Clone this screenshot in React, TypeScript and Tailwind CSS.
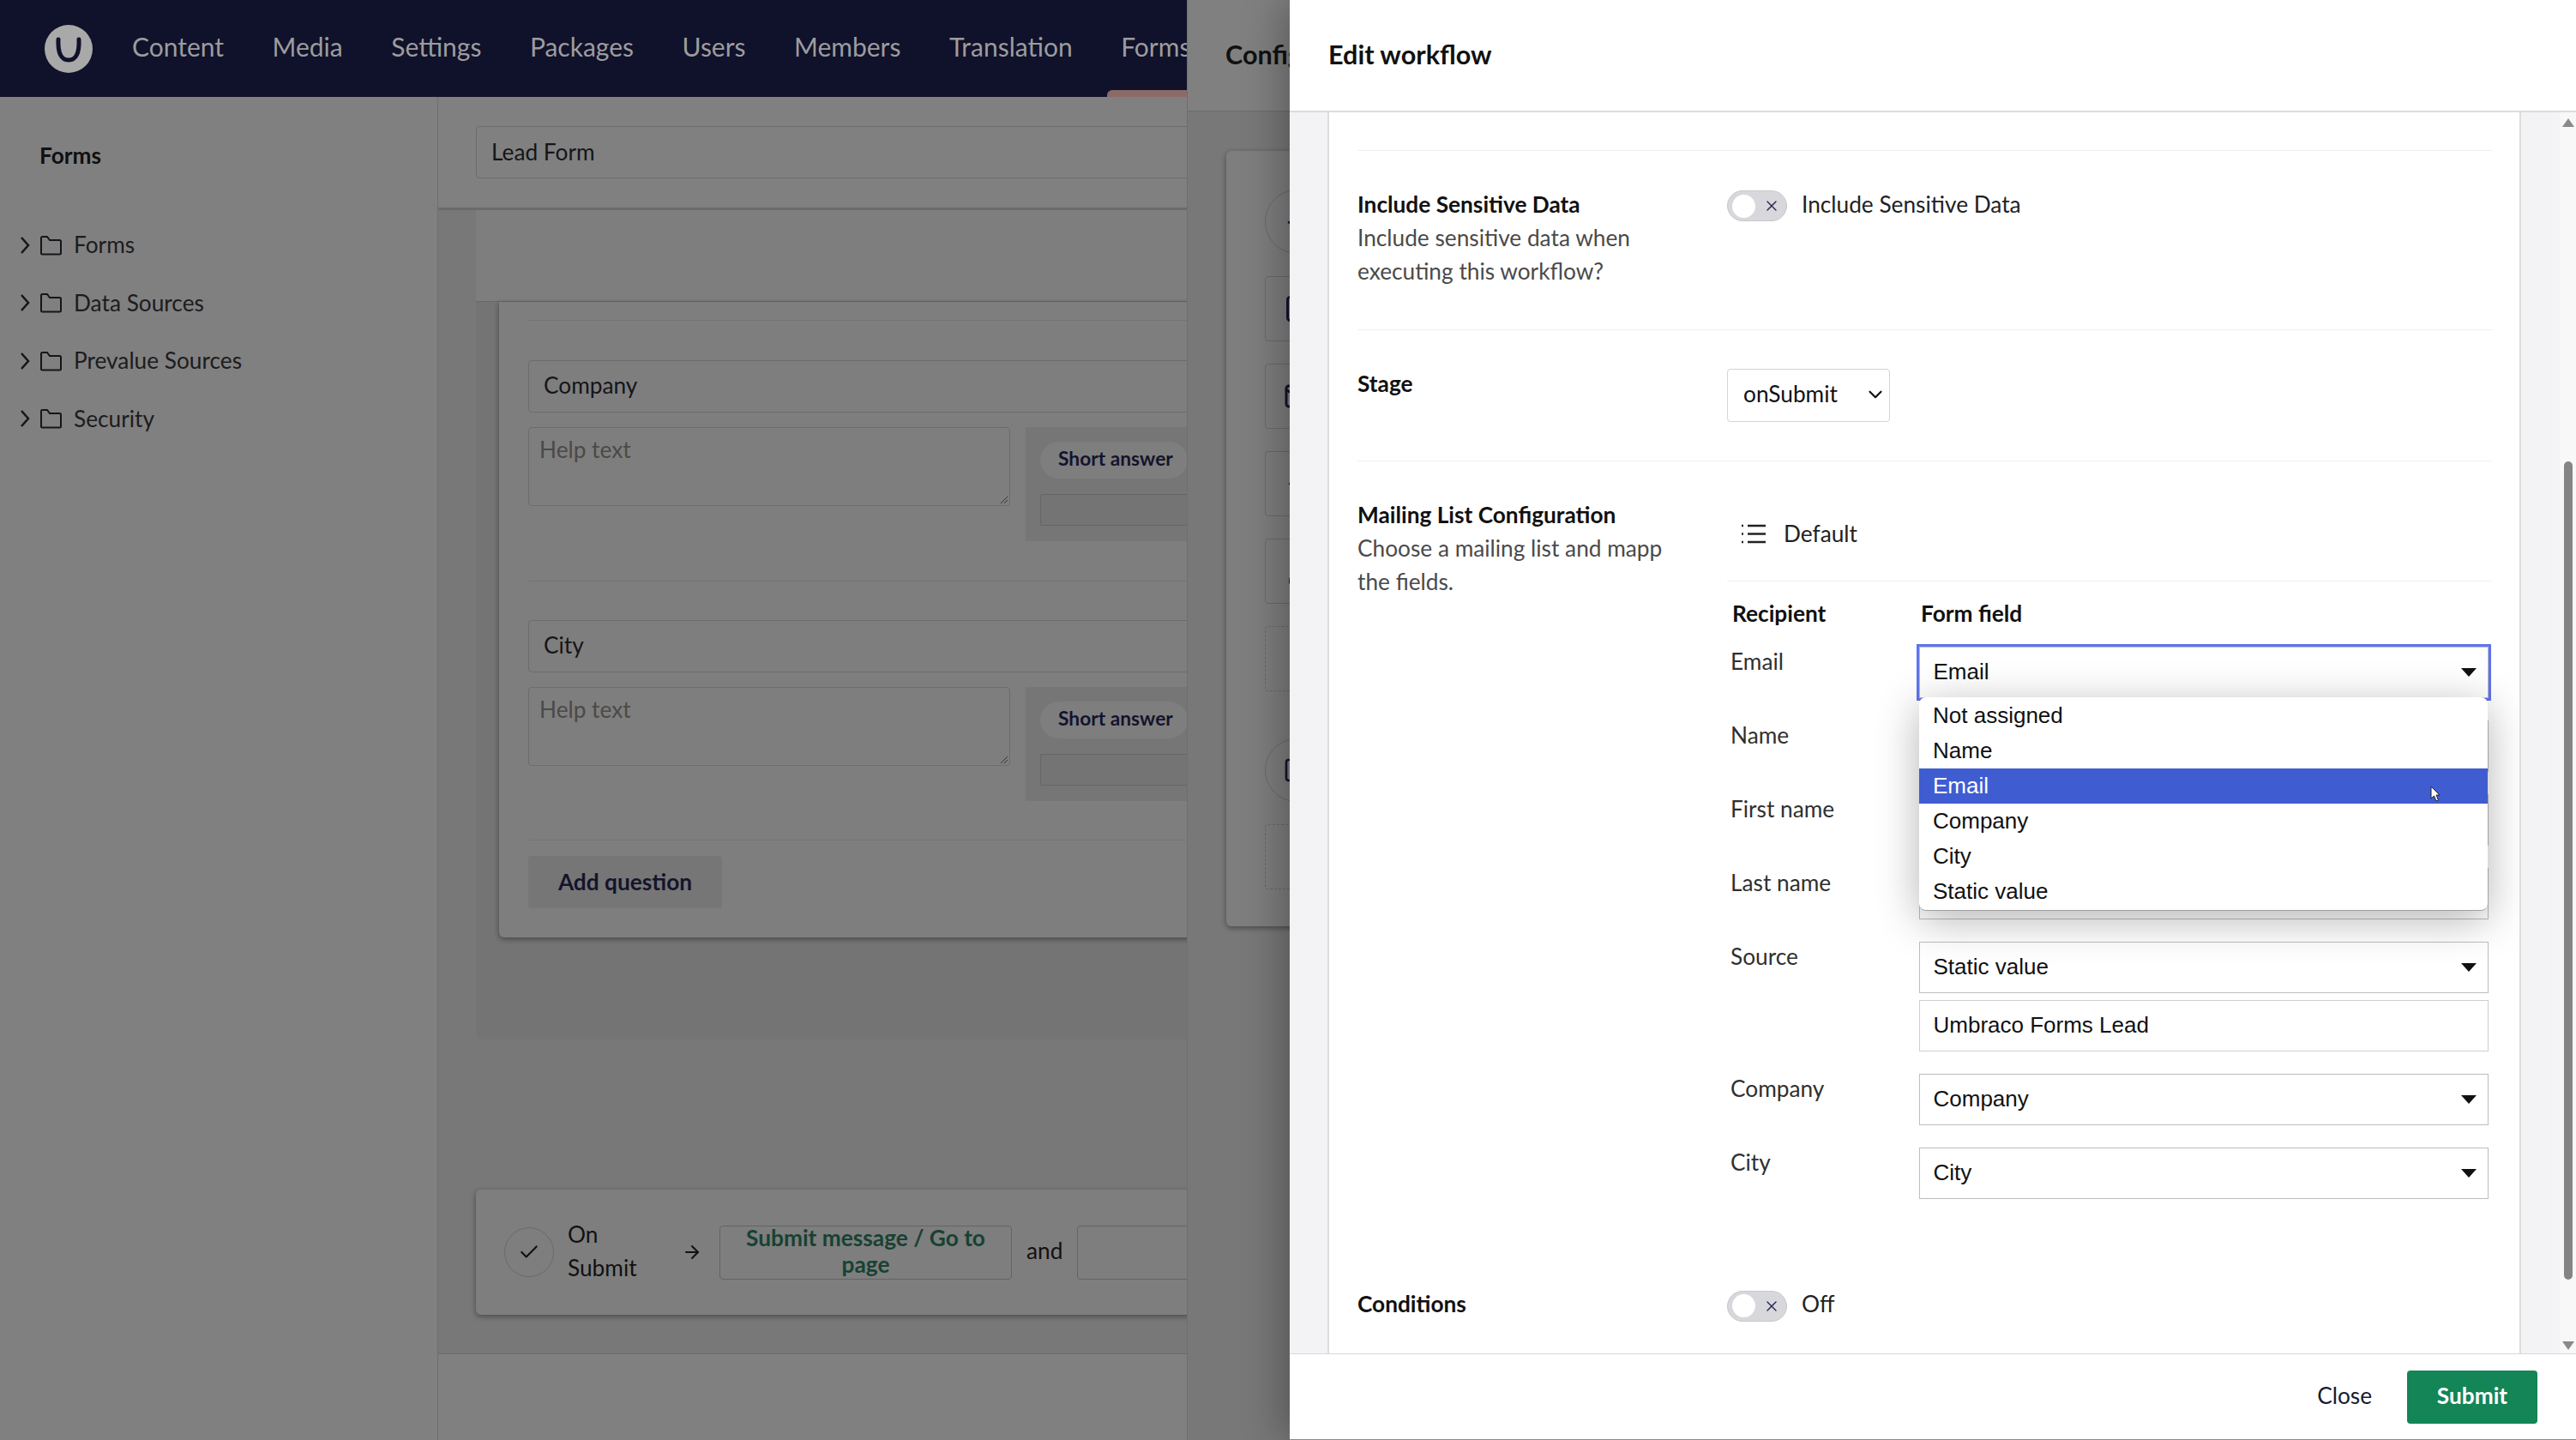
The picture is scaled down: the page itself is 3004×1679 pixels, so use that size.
import { Check, ChevronDown, Mail, ArrowLeft, User, Square, ArrowRight, X } from "lucide-react";

const navItems = ["Content", "Media", "Settings", "Packages", "Users", "Members", "Translation", "Forms"];
const treeItems = ["Forms", "Data Sources", "Prevalue Sources", "Security"];
const options = ["Not assigned", "Name", "Email", "Company", "City", "Static value"];

function Logo() {
  return (
    <svg width="56" height="56" viewBox="0 0 56 56" className="shrink-0">
      <circle cx="28" cy="28" r="28" fill="#a9a9a9" />
      <path d="M16 17 Q15 41 28 41 Q41 41 40 17" fill="none" stroke="#10112a" strokeWidth="5" strokeLinecap="round" />
    </svg>
  );
}

function Folder() {
  return (
    <svg width="27" height="24" viewBox="0 0 27 24" fill="none" stroke="#15151a" strokeWidth="2" className="shrink-0">
      <path d="M2 21V3.5C2 2.5 2.5 2 3.5 2H9l3 4h11.5c1 0 1.500.5 1.500 1.500V21c0 1-.5 1.500-1.500 1.500h-20C2.500 22.500 2 22 2 21Z" />
    </svg>
  );
}

function Question({ label }: { label: string }) {
  return (
    <div>
      <div className="flex h-[61px] w-[900px] items-center rounded-[4px] border border-[#6c6c6c] pb-[2px] pl-[17px] text-[26.25px] text-[#15151a]">
        {label}
      </div>
      <div className="mt-[17px] flex items-start">
        <div className="relative h-[92px] w-[562px] shrink-0 rounded-[4px] border border-[#6c6c6c] pl-[12px] pt-[6px] text-[26.25px] text-[#4c4946]">
          Help text
          <svg width="10" height="10" viewBox="0 0 10 10" stroke="#333" className="absolute bottom-[1px] right-[1px]">
            <path d="M1 9 9 1M5 9 9 5" />
          </svg>
        </div>
        <div className="ml-[18px] h-[133px] w-[300px] shrink-0 bg-[#767676] pl-[17px] pt-[17px]">
          <div className="flex h-[43px] w-[172px] items-center rounded-[22px] bg-[#7e7e7e] pb-[2px] pl-[21px] text-[22.75px] font-bold text-[#14142c]">
            Short answer
          </div>
          <div className="mt-[18px] h-[37px] w-[260px] rounded-[2px] border border-[#666] bg-[#747474]" />
        </div>
      </div>
    </div>
  );
}

function SideBox({ dashed, children }: { dashed?: boolean; children?: React.ReactNode }) {
  return (
    <div className={`flex h-[76px] w-[200px] items-center rounded-[4px] border pl-[21px] ${dashed ? "border-dashed border-[#6a6a6a]" : "border-[#6a6a6a]"}`}>
      {children}
    </div>
  );
}

function Toggle() {
  return (
    <div className="relative flex h-[36px] w-[70px] shrink-0 items-center rounded-[18px] border border-[#c8c8c8] bg-[#d8d8dc] pl-[5px]">
      <div className="h-[27px] w-[27px] rounded-full bg-white" />
      <X size={20} strokeWidth={1.7} className="ml-[9px] text-[#2a2a55]" />
    </div>
  );
}

function NativeSelect({ value, focused }: { value?: string; focused?: boolean }) {
  return (
    <div className={`flex h-[60px] w-[664px] items-center justify-between border border-[#bdbdbd] bg-white pl-[15.500px] pr-[12px] font-['Liberation_Sans',sans-serif] text-[26px] text-[#111] ${focused ? "ring-[3px] ring-[#5f73ee]" : ""}`}>
      <span className="pb-[2px]">{value}</span>
      <svg width="20" height="12" viewBox="0 0 20 12">
        <path d="M1 1h18L10 11Z" fill="#111" />
      </svg>
    </div>
  );
}

function MapRow({ label, children }: { label: string; children: React.ReactNode }) {
  return (
    <div className="grid grid-cols-[224px_664px] items-start">
      <div className="pl-[4px] text-[26.25px] leading-[39px] text-[#303030]">{label}</div>
      <div className="pt-[2px]">{children}</div>
    </div>
  );
}

function BackPage() {
  return (
    <div className="flex h-full w-[1384px] flex-col overflow-hidden bg-[#808080]">
      <header className="flex h-[113px] shrink-0 items-center bg-[#10112a] pl-[52px]">
        <Logo />
        <nav className="ml-[46px] flex h-full gap-[56.500px]">
          {navItems.map((item) => (
            <div key={item} className="relative flex h-full items-center whitespace-nowrap pb-[4px] text-[30px] text-[#9c9c9f]">
              {item}
              {item === "Forms" && <div className="absolute bottom-0 left-[-16px] h-[8px] w-[120px] rounded-t-[6px] bg-[#8b6b68]" />}
            </div>
          ))}
        </nav>
      </header>
      <div className="flex min-h-0 flex-1">
        <aside className="w-[511px] shrink-0 border-r border-[#6e6e6e]">
          <div className="pl-[46px] pt-[49px] text-[26.25px] font-bold leading-[39px] text-[#101010]">Forms</div>
          <ul className="mt-[65px] flex flex-col gap-[28px]">
            {treeItems.map((item) => (
              <li key={item} className="flex h-[39.500px] items-center pl-[23px] text-[26.25px] text-[#1c1c1e]">
                <svg width="12" height="22" viewBox="0 0 12 22" fill="none" stroke="#15151a" strokeWidth="2.500" className="shrink-0">
                  <path d="M2 2l8 9-8 9" />
                </svg>
                <span className="ml-[11px]"><Folder /></span>
                <span className="ml-[13px]">{item}</span>
              </li>
            ))}
          </ul>
        </aside>
        <main className="flex min-w-0 flex-1 flex-col overflow-hidden">
          <div className="h-[132px] shrink-0 border-b-[3px] border-[#6a6a6a] pl-[44px] pt-[34px]">
            <div className="flex h-[61px] w-[900px] items-center rounded-[4px] border border-[#6c6c6c] pl-[17px] text-[26.25px] text-[#15151a]">
              Lead Form
            </div>
          </div>
          <div className="flex-1 bg-[#787878] pl-[44px]">
            <div className="h-[967px] w-[1000px] rounded-b-[6px] bg-[#747474]">
              <div className="h-[107px] border-b border-[#686868] bg-[#7e7e7e]" />
              <div className="ml-[27px] h-[741px] w-[900px] rounded-b-[6px] bg-[#7e7e7e] px-[34px] pt-[21px] shadow-[0_2px_6px_rgba(0,0,0,0.4)]">
                <div className="border-t border-[#747474] pt-[46px]">
                  <Question label="Company" />
                </div>
                <div className="mt-[46px] border-t border-[#747474] pt-[45px]">
                  <Question label="City" />
                </div>
                <div className="mt-[45px] border-t border-[#747474] pt-[18px]">
                  <div className="flex h-[61px] w-[226px] items-center justify-center rounded-[4px] bg-[#767676] text-[26.25px] font-bold text-[#14142c]">
                    Add question
                  </div>
                </div>
              </div>
            </div>
            <div className="mt-[175px] flex h-[146px] w-[1000px] items-center rounded-[6px] bg-[#7e7e7e] pl-[33px] shadow-[0_2px_6px_rgba(0,0,0,0.4)]">
              <div className="flex h-[58px] w-[58px] shrink-0 items-center justify-center rounded-full border border-[#6a6a6a]">
                <Check size={26} strokeWidth={2} className="text-[#111]" />
              </div>
              <div className="ml-[16px] w-[133px] pb-[3px] text-[26.25px] leading-[39px] text-[#111]">On<br />Submit</div>
              <ArrowRight size={24} strokeWidth={2} className="shrink-0 text-[#111]" />
              <div className="ml-[20px] flex h-[63px] w-[341px] shrink-0 items-center justify-center rounded-[4px] border border-[#646464] px-[24px] pb-[2px] text-center text-[26.25px] font-bold leading-[31px] text-[#174233]">
                Submit message / Go to page
              </div>
              <div className="ml-[17px] pb-[2px] text-[26.25px] text-[#111]">and</div>
              <div className="ml-[17px] h-[63px] w-[200px] shrink-0 rounded-[4px] border border-[#646464]" />
            </div>
          </div>
          <div className="h-[101px] shrink-0 border-t border-[#6c6c6c]" />
        </main>
      </div>
    </div>
  );
}

function MiddleLayer() {
  return (
    <div className="absolute bottom-0 left-[1384px] top-0 flex w-[120px] flex-col overflow-hidden border-l border-[#6e6e6e] bg-[#787878]">
      <div className="flex h-[130px] shrink-0 items-center whitespace-nowrap border-b border-[#6c6c6c] bg-[#808080] pb-[2px] pl-[44px] text-[30.6px] font-bold text-[#111]">
        Config
      </div>
      <div className="ml-[45px] mt-[46px] h-[904px] w-[300px] rounded-[6px] bg-[#7e7e7e] pl-[45px] shadow-[0_2px_6px_rgba(0,0,0,0.4)]">
        <div className="flex flex-col">
          <div className="mt-[45px] flex h-[75px] w-[75px] items-center justify-center rounded-full border border-[#6a6a6a]">
            <Check size={30} className="text-[#14142c]" />
          </div>
          <div className="mt-[26px] flex flex-col gap-[26px]">
            <SideBox><Square size={36} className="text-[#14142c]" /></SideBox>
            <SideBox><Mail size={36} className="text-[#14142c]" /></SideBox>
            <SideBox><ArrowLeft size={36} className="text-[#14142c]" /></SideBox>
            <SideBox><User size={36} className="text-[#14142c]" /></SideBox>
            <SideBox dashed />
          </div>
          <div className="mt-[55px] flex h-[74px] w-[74px] items-center justify-center rounded-full border border-[#6a6a6a]">
            <Square size={32} className="text-[#14142c]" />
          </div>
          <div className="mt-[26px]"><SideBox dashed /></div>
        </div>
      </div>
      <div className="flex-1" />
    </div>
  );
}

function EditPanel() {
  return (
    <div className="absolute bottom-0 left-[1504px] right-0 top-0 flex flex-col border-b border-[#8a8a8a] bg-white shadow-[-8px_0_45px_rgba(0,0,0,0.3)]">
      <div className="flex h-[131px] shrink-0 items-center border-b-2 border-[#dcdcdc] pb-[2px] pl-[45px] text-[30.6px] font-bold text-[#111]">
        Edit workflow
      </div>
      <div className="flex min-h-0 flex-1 overflow-hidden bg-[#f3f3f5]">
        <div className="ml-[44px] h-full w-[1392px] overflow-hidden border-x-2 border-[#dcdcdc] bg-white pl-[33px]">
          <div className="w-[1323px] pt-[44px]">
            <div className="flex h-[209px] border-t border-[#f0f0f0]">
              <div className="w-[431px] pt-[43px] text-[26.25px] leading-[39px] text-[#4a4a4a]">
                <div className="font-bold text-[#111]">Include Sensitive Data</div>
                Include sensitive data when<br />executing this workflow?
              </div>
              <div className="flex h-fit items-center gap-[17px] pt-[43px] text-[26.25px] text-[#222]">
                <Toggle />
                <span className="pb-[3px]">Include Sensitive Data</span>
              </div>
            </div>
            <div className="flex h-[153px] border-t border-[#f0f0f0]">
              <div className="w-[431px] pt-[43px] text-[26.25px] font-bold leading-[39px] text-[#111]">Stage</div>
              <div className="pt-[45px]">
                <div className="flex h-[62px] w-[190px] items-center justify-between rounded-[4px] border border-[#d4d4d4] pb-[2px] pl-[18px] pr-[3px] text-[26.25px] text-[#111]">
                  onSubmit
                  <ChevronDown size={26} strokeWidth={2} />
                </div>
              </div>
            </div>
            <div className="flex border-t border-[#f0f0f0]">
              <div className="w-[431px] pt-[43px] text-[26.25px] leading-[39px] text-[#4a4a4a]">
                <div className="font-bold text-[#111]">Mailing List Configuration</div>
                Choose a mailing list and mapp<br />the fields.
              </div>
              <div className="w-[892px] pt-[65px]">
                <div className="flex h-[75px] items-start border-b border-[#f0f0f0] pl-[16px] text-[26.25px] leading-[39px] text-[#222]">
                  <svg width="30" height="39" viewBox="0 0 30 39" fill="none" stroke="#222" strokeWidth="2.500">
                    <path d="M8 10h21M8 19.500h21M8 29h21" />
                    <path d="M1 10h2M1 19.500h2M1 29h2" />
                  </svg>
                  <span className="ml-[20px]">Default</span>
                </div>
                <div className="mt-[18px] grid grid-cols-[224px_664px] text-[26.25px] font-bold leading-[39px] text-[#111]">
                  <div className="pl-[6px]">Recipient</div>
                  <div className="pl-[2px]">Form field</div>
                </div>
                <div className="mt-[17px] flex flex-col gap-[24px]">
                  <MapRow label="Email">
                    <div className="relative">
                      <NativeSelect value="Email" focused />
                      <div className="absolute left-0 top-[59px] z-10 w-[663px] overflow-hidden rounded-[8px] border-b border-[#a0a0a0] bg-white py-[1px] font-['Liberation_Sans',sans-serif] text-[26px] leading-[41px] text-[#111] shadow-[0_10px_50px_rgba(0,0,0,0.3)]">
                        {options.map((option) => (
                          <div key={option} className={`relative h-[41px] pl-[16px] ${option === "Email" ? "bg-[#3f5dd1] text-white" : ""}`}>
                            {option}
                            {option === "Email" && (
                              <svg width="12" height="19" viewBox="0 0 12 19" className="absolute left-[596px] top-[20px]">
                                <path d="M1 1v14l3.500-3 2.500 6 2.500-1-2.500-6H11Z" fill="#fff" stroke="#222" strokeWidth="1" />
                              </svg>
                            )}
                          </div>
                        ))}
                      </div>
                    </div>
                  </MapRow>
                  <MapRow label="Name"><NativeSelect /></MapRow>
                  <MapRow label="First name"><NativeSelect /></MapRow>
                  <MapRow label="Last name"><NativeSelect /></MapRow>
                  <MapRow label="Source">
                    <div className="flex flex-col gap-[8px]">
                      <NativeSelect value="Static value" />
                      <div className="flex h-[60px] w-[664px] items-center border border-[#cfcfcf] pb-[2px] pl-[15.500px] font-['Liberation_Sans',sans-serif] text-[26px] text-[#111]">
                        Umbraco Forms Lead
                      </div>
                    </div>
                  </MapRow>
                  <MapRow label="Company"><NativeSelect value="Company" /></MapRow>
                  <MapRow label="City"><NativeSelect value="City" /></MapRow>
                </div>
              </div>
            </div>
            <div className="mt-[103px] flex">
              <div className="w-[431px] text-[26.25px] font-bold leading-[39px] text-[#111]">Conditions</div>
              <div className="flex items-center gap-[17px] text-[26.25px] text-[#222]">
                <Toggle />
                <span className="pb-[4px]">Off</span>
              </div>
            </div>
          </div>
        </div>
        <div className="ml-auto flex h-full w-[19px] flex-col items-center bg-[#f8f8f8]">
          <svg width="14" height="10" viewBox="0 0 14 10" className="mt-[7px]"><path d="M7 0l7 10H0Z" fill="#8a8a8a" /></svg>
          <div className="mt-[390px] h-[954px] w-[10px] rounded-[5px] bg-[#858585]" />
          <svg width="14" height="10" viewBox="0 0 14 10" className="mt-[72px]"><path d="M7 10 14 0H0Z" fill="#8a8a8a" /></svg>
        </div>
      </div>
      <div className="flex h-[100px] shrink-0 items-center justify-end border-t border-[#d8d8d8] pr-[45px]">
        <span className="pb-[2px] text-[26.25px] text-[#1a1a2e]">Close</span>
        <button className="ml-[41px] h-[62px] w-[152px] rounded-[4px] bg-[#138556] pb-[2px] text-[26.25px] font-bold text-white">Submit</button>
      </div>
    </div>
  );
}

export default function App() {
  return (
    <div className="relative h-[1679px] w-[3004px] overflow-hidden font-['Lato',sans-serif]">
      <BackPage />
      <MiddleLayer />
      <EditPanel />
    </div>
  );
}
